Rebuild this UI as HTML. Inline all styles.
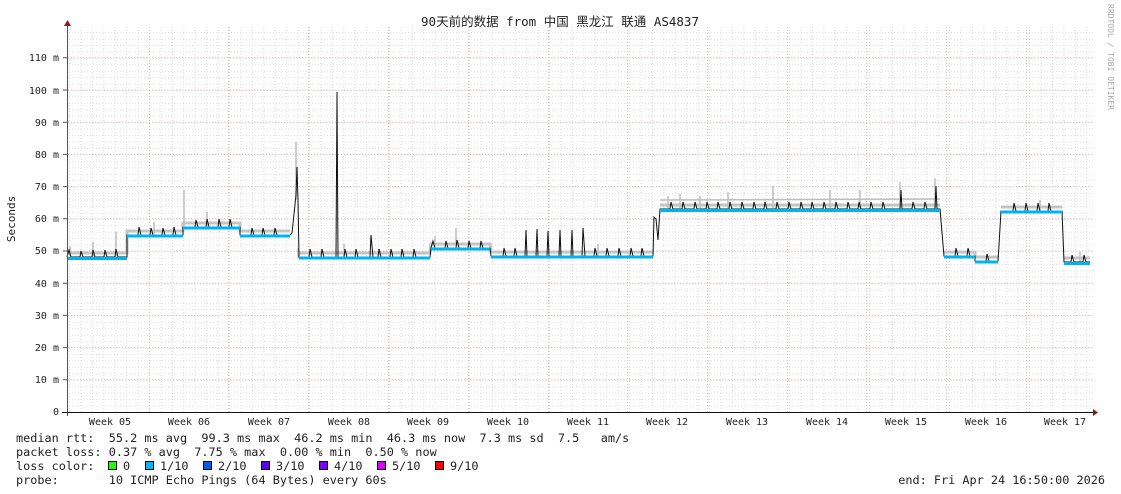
<!DOCTYPE html>
<html><head><meta charset="utf-8"><style>
html,body{margin:0;padding:0;background:#fff;}
svg{display:block}
text{font-family:"DejaVu Sans Mono","Liberation Mono","Noto Sans CJK SC",monospace;white-space:pre;}
</style></head><body>
<svg width="1121" height="494" viewBox="0 0 1121 494" xmlns="http://www.w3.org/2000/svg">
<defs>
<pattern id="hmin" patternUnits="userSpaceOnUse" x="0" y="412" width="1121" height="6.44">
<line x1="0" y1="0.5" x2="1121" y2="0.5" stroke="#dcdcdc" stroke-width="1" stroke-dasharray="1,2"/>
</pattern>
<pattern id="vmin" patternUnits="userSpaceOnUse" x="69" y="0" width="11.43" height="500">
<line x1="0.5" y1="0" x2="0.5" y2="500" stroke="#dcdcdc" stroke-width="1" stroke-dasharray="1,2"/>
</pattern>
</defs>
<rect x="68" y="27" width="1025" height="385" fill="url(#hmin)"/>
<rect x="68" y="27" width="1025" height="385" fill="url(#vmin)"/>
<g stroke="#f2b4b4" stroke-width="1" stroke-dasharray="1,2">
<path d="M68 379.8H1093M68 347.6H1093M68 315.4H1093M68 283.2H1093M68 251H1093M68 218.8H1093M68 186.6H1093M68 154.4H1093M68 122.2H1093M68 90H1093M68 57.8H1093"/>
<path d="M149.5 27V412M228.5 27V412M308.5 27V412M388.5 27V412M468.5 27V412M548.5 27V412M627.5 27V412M707.5 27V412M787.5 27V412M866.5 27V412M946.5 27V412M1026.5 27V412"/>
</g>
<g stroke="#c4c4c4" stroke-width="3" fill="none">
<path d="M68 253 L127 253 L127 231 L183 231 L183 223 L240 223 L240 231 L290 231 M299 253 L430 253 L431 244 L490 244 L491 252 L653 252 M660 205 L940 205 M944 252 L975 252 L975 257 L998 257 M1001 207 L1062 207 M1064 258 L1090 258"/>
</g>
<g stroke="#bdbdbd" stroke-width="1.5" fill="none">
<path d="M296 142V200M184 190V226M70 246V256M93 242V256M116 232V256M154 222V234M207 212V226M298 248V258M344 244V256M435 236V246M456 228V246M598 244V256M668 196V208M680 194V208M700 196V208M728 192V208M773 186V208M830 190V208M860 190V208M900 182V208M935 178V208M1040 200V210M1080 252V262M660 200L940 199"/>
</g>
<path fill="none" stroke="#111" stroke-width="1" d="M67 257 L69 250 L71 257 L80 257 L81 251 L83 257 L92 257 L93 250 L95 257 L104 257 L105 250 L107 257 L115 257 L116 249 L118 257 L127 257 L127 235 L138 235 L139 227 L141 235 L150 235 L151 228 L153 235 L162 235 L163 228 L165 235 L173 235 L174 227 L176 235 L183 235 L183 227 L195 227 L196 220 L198 227 L206 227 L207 219 L209 227 L218 227 L219 219 L221 227 L229 227 L230 219 L232 227 L240 227 L240 235 L251 235 L252 228 L254 235 L262 235 L263 228 L265 235 L274 235 L275 228 L277 235 L290 235 L292 233 L296 195 L297 167 L298 200 L299 257 L309 257 L310 249 L312 257 L321 257 L322 249 L324 257 L336 257 L337 92 L338 257 L344 257 L345 249 L347 257 L355 257 L356 249 L358 257 L370 257 L371 235 L373 257 L378 257 L379 249 L381 257 L390 257 L391 249 L393 257 L401 257 L402 249 L404 257 L413 257 L414 249 L416 257 L430 257 L431 248 L433 241 L435 248 L445 248 L446 241 L448 248 L456 248 L457 240 L459 248 L468 248 L469 241 L471 248 L480 248 L481 241 L483 248 L490 248 L491 256 L503 256 L504 248 L506 256 L514 256 L515 248 L517 256 L525 256 L526 230 L527 256 L536 256 L537 229 L538 256 L547 256 L548 231 L549 256 L559 256 L560 230 L561 256 L571 256 L572 230 L573 256 L582 256 L583 228 L585 256 L594 256 L595 248 L597 256 L606 256 L607 248 L609 256 L618 256 L619 248 L621 256 L630 256 L631 248 L633 256 L641 256 L642 248 L644 256 L653 256 L654 217 L656 219 L658 240 L660 209 L670 209 L671 202 L673 209 L682 209 L683 202 L685 209 L694 209 L695 202 L697 209 L706 209 L707 202 L709 209 L717 209 L718 202 L720 209 L729 209 L730 202 L732 209 L741 209 L742 202 L744 209 L753 209 L754 202 L756 209 L764 209 L765 202 L767 209 L776 209 L777 202 L779 209 L788 209 L789 202 L791 209 L800 209 L801 202 L803 209 L811 209 L812 202 L814 209 L823 209 L824 202 L826 209 L835 209 L836 202 L838 209 L847 209 L848 202 L850 209 L858 209 L859 202 L861 209 L870 209 L871 202 L873 209 L882 209 L883 202 L885 209 L900 209 L901 190 L902 209 L912 209 L913 202 L915 209 L924 209 L925 202 L927 209 L935 209 L936 186 L937 209 L940 209 L944 256 L955 256 L956 248 L958 256 L967 256 L968 248 L970 256 L975 256 L975 261 L986 261 L987 254 L989 261 L998 261 L999 245 L1001 211 L1013 211 L1014 203 L1016 211 L1025 211 L1026 203 L1028 211 L1037 211 L1038 203 L1040 211 L1048 211 L1049 203 L1051 211 L1060 211 L1062 211 L1064 262 L1071 262 L1072 255 L1074 262 L1083 262 L1084 255 L1086 262 L1090 262"/>
<path fill="none" stroke="#00b4f4" stroke-width="3" d="M68 258.5 L127 258.5 M127 236 L183 236 M183 228 L240 228 M240 236 L290 236 M299 258 L430 258 M431 249 L490 249 M491 257 L653 257 M660 210.5 L940 210.5 M944 257 L975 257 M975 262 L998 262 M1001 212 L1062 212 M1064 263.5 L1090 263.5"/>
<line x1="67.5" y1="22" x2="67.5" y2="416" stroke="#555" stroke-width="1"/>
<line x1="62" y1="412.5" x2="1094" y2="412.5" stroke="#111" stroke-width="1"/>
<path d="M64 26 L67.5 20 L71 26Z" fill="#8b1a1a"/>
<path d="M1093 409 L1098 412.5 L1093 416Z" fill="#8b1a1a"/>
<g stroke="#555"><path d="M63 379.8H67M63 347.6H67M63 315.4H67M63 283.2H67M63 251H67M63 218.8H67M63 186.6H67M63 154.4H67M63 122.2H67M63 90H67M63 57.8H67"/></g>
<g font-size="10" fill="#222" text-anchor="end">
<text x="59" y="415">0</text>
<text x="59" y="383">10 m</text>
<text x="59" y="351">20 m</text>
<text x="59" y="319">30 m</text>
<text x="59" y="287">40 m</text>
<text x="59" y="254">50 m</text>
<text x="59" y="222">60 m</text>
<text x="59" y="190">70 m</text>
<text x="59" y="158">80 m</text>
<text x="59" y="126">90 m</text>
<text x="59" y="94">100 m</text>
<text x="59" y="61">110 m</text>
</g>
<g font-size="10" fill="#222" text-anchor="middle">
<text x="110" y="425">Week 05</text>
<text x="189" y="425">Week 06</text>
<text x="269" y="425">Week 07</text>
<text x="349" y="425">Week 08</text>
<text x="428" y="425">Week 09</text>
<text x="508" y="425">Week 10</text>
<text x="588" y="425">Week 11</text>
<text x="667" y="425">Week 12</text>
<text x="747" y="425">Week 13</text>
<text x="827" y="425">Week 14</text>
<text x="906" y="425">Week 15</text>
<text x="986" y="425">Week 16</text>
<text x="1065" y="425">Week 17</text>
</g>
<text x="560" y="26" font-size="12.5" fill="#222" text-anchor="middle">90天前的数据 from 中国 黑龙江 联通 AS4837</text>
<text transform="translate(15,219) rotate(-90)" font-size="11" fill="#222" text-anchor="middle">Seconds</text>
<text transform="translate(1108,4) rotate(90)" font-size="8" fill="#aaa">RRDTOOL / TOBI OETIKER</text>
<g font-size="11.85" fill="#222">
<text x="16" y="442">median rtt:  55.2 ms avg  99.3 ms max  46.2 ms min  46.3 ms now  7.3 ms sd  7.5   am/s</text>
<text x="16" y="456">packet loss: 0.37 % avg  7.75 % max  0.00 % min  0.50 % now</text>
<text x="16" y="470">loss color:</text>
<text x="16" y="484">probe:       10 ICMP Echo Pings (64 Bytes) every 60s</text>
<text x="1105" y="484" text-anchor="end">end: Fri Apr 24 16:50:00 2026</text>
<text x="123" y="470">0</text>
<text x="160" y="470">1/10</text>
<text x="218" y="470">2/10</text>
<text x="276" y="470">3/10</text>
<text x="334" y="470">4/10</text>
<text x="392" y="470">5/10</text>
<text x="450" y="470">9/10</text>
</g>
<g stroke="#000" stroke-width="1">
<rect x="108.5" y="461.5" width="8" height="8" fill="#26ff00"/>
<rect x="145.5" y="461.5" width="8" height="8" fill="#00b8ff"/>
<rect x="203.5" y="461.5" width="8" height="8" fill="#0059ff"/>
<rect x="261.5" y="461.5" width="8" height="8" fill="#5e00ff"/>
<rect x="319.5" y="461.5" width="8" height="8" fill="#7e00ff"/>
<rect x="377.5" y="461.5" width="8" height="8" fill="#dd00ff"/>
<rect x="435.5" y="461.5" width="8" height="8" fill="#ff0000"/>
</g>
</svg>
</body></html>
